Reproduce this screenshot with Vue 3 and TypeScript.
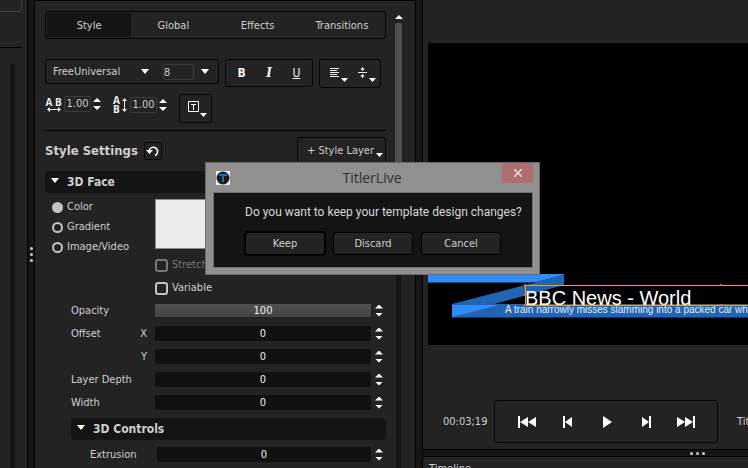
<script setup lang="ts">
import { ref, reactive } from 'vue'

interface Field {
  id: string
  label: string
  axis?: string
  value: string
  fill?: boolean
}

const tabs: string[] = ['Style', 'Global', 'Effects', 'Transitions']
const activeTab = ref('Style')
const fontFamily = ref('FreeUniversal')
const fontSize = ref('8')
const tracking = ref('1.00')
const leading = ref('1.00')
const fillModes: string[] = ['Color', 'Gradient', 'Image/Video']
const fillMode = ref('Color')
const stretch = ref(false)
const variable = ref(false)
const dialogOpen = ref(true)

const fields = reactive<Field[]>([
  { id: 'opacity', label: 'Opacity', value: '100', fill: true },
  { id: 'offset-x', label: 'Offset', axis: 'X', value: '0' },
  { id: 'offset-y', label: '', axis: 'Y', value: '0' },
  { id: 'depth', label: 'Layer Depth', value: '0' },
  { id: 'width', label: 'Width', value: '0' },
])
const extrusion = ref('0')

function step(field: Field, by: number) {
  field.value = String(Number(field.value) + by)
}
</script>

<template>
  <div class="app">
    <aside class="rail">
      <div class="rail-box"></div>
      <div class="rail-track"></div>
    </aside>
    <div class="splitter vertical"><i></i><i></i><i></i></div>

    <main class="panel">
      <div class="content">
        <nav class="tabs">
          <button v-for="t in tabs" :key="t" :class="{ active: t === activeTab }" @click="activeTab = t">{{ t }}</button>
        </nav>

        <div class="tools">
          <div class="group fonts">
            <div class="pick family">
              <select v-model="fontFamily" aria-label="Font"><option>FreeUniversal</option></select>
              <svg width="8" height="5"><path d="M0 0H8L4 5Z" fill="#fff" /></svg>
            </div>
            <div class="pick size">
              <select v-model="fontSize" aria-label="Font size"><option>8</option></select>
              <svg width="8" height="5"><path d="M0 0H8L4 5Z" fill="#fff" /></svg>
            </div>
          </div>
          <div class="group marks">
            <button class="b" aria-label="Bold">B</button>
            <button class="i" aria-label="Italic">I</button>
            <button class="u" aria-label="Underline">U</button>
          </div>
          <div class="group aligns">
            <button aria-label="Align text">
              <svg width="20" height="18" viewBox="0 0 20 18">
                <path d="M1 3.500H10M1 5.500H8M1 7.500H10M1 9.500H8M1 11.500H10" stroke="#eee" fill="none" />
                <path d="M12 13H19L15.500 17Z" fill="#fff" />
              </svg>
            </button>
            <button aria-label="Align vertically">
              <svg width="20" height="18" viewBox="0 0 20 18">
                <path d="M1 7.500H10M5.500 2V5M5.500 10V13" stroke="#eee" fill="none" />
                <path d="M3 3.500H8L5.500 6ZM3 11.500H8L5.500 9Z" fill="#eee" />
                <path d="M12 13H19L15.500 17Z" fill="#fff" />
              </svg>
            </button>
          </div>
        </div>

        <div class="metrics">
          <div class="metric">
            <span class="caption">
              <b>A B</b>
              <svg width="14" height="5"><path d="M2 2.500H12" stroke="#eee" /><path d="M0 2.500L3 0V5ZM14 2.500L11 0V5Z" fill="#eee" /></svg>
            </span>
            <input v-model="tracking" aria-label="Tracking" />
            <span class="spin"><button aria-label="Increase tracking"></button><button aria-label="Decrease tracking"></button></span>
          </div>
          <div class="metric">
            <span class="caption stacked">
              <span><b>A</b><b>B</b></span>
              <svg width="5" height="14"><path d="M2.500 2V12" stroke="#eee" /><path d="M2.500 0L5 3H0ZM2.500 14L5 11H0Z" fill="#eee" /></svg>
            </span>
            <input v-model="leading" aria-label="Leading" />
            <span class="spin"><button aria-label="Increase leading"></button><button aria-label="Decrease leading"></button></span>
          </div>
          <button class="group text-box" aria-label="Text box">
            <svg width="20" height="17" viewBox="0 0 20 17">
              <path d="M1.500 1.500H11.500V11.500H1.500Z M4 4.500H9M6.500 4V10" stroke="#fff" fill="none" />
              <path d="M13 13H20L16.500 17Z" fill="#fff" />
            </svg>
          </button>
        </div>

        <div class="heading">
          <h2>Style Settings</h2>
          <button class="group reset" aria-label="Reset">
            <svg width="14" height="14" viewBox="0 0 14 14">
              <path d="M3 7A4.300 4.300 0 1 1 9 11.500" stroke="#fff" stroke-width="1.500" fill="none" />
              <path d="M0 6H7L3.500 10Z" fill="#fff" />
            </svg>
          </button>
          <button class="group layer">+ Style Layer
            <svg width="7" height="4"><path d="M0 0H7L3.500 4Z" fill="#fff" /></svg>
          </button>
        </div>

        <button class="section"><svg width="8" height="5"><path d="M0 0H8L4 5Z" fill="#fff" /></svg>3D Face</button>

        <div class="face">
          <div class="modes">
            <label v-for="m in fillModes" :key="m"><input v-model="fillMode" type="radio" name="fill" :value="m" />{{ m }}</label>
          </div>
          <div class="swatch-col">
            <button class="swatch" aria-label="Face color"></button>
            <label class="dim"><input v-model="stretch" type="checkbox" disabled />Stretch</label>
            <label><input v-model="variable" type="checkbox" />Variable</label>
          </div>
        </div>

        <div class="fields">
          <div v-for="f in fields" :key="f.id" class="field">
            <label :for="f.id"><span>{{ f.label }}</span><span>{{ f.axis }}</span></label>
            <input :id="f.id" v-model="f.value" :class="{ fill: f.fill }" />
            <span class="spin"><button aria-label="Increase" @click="step(f, 1)"></button><button aria-label="Decrease" @click="step(f, -1)"></button></span>
          </div>
        </div>

        <button class="section nested"><svg width="8" height="5"><path d="M0 0H8L4 5Z" fill="#fff" /></svg>3D Controls</button>
        <div class="field inner">
          <label for="extrusion">Extrusion</label>
          <input id="extrusion" v-model="extrusion" />
          <span class="spin"><button aria-label="Increase"></button><button aria-label="Decrease"></button></span>
        </div>
      </div>
      <div class="scroll">
        <svg width="8" height="4"><path d="M0 4H8L4 0Z" fill="#fff" /></svg>
        <div class="thumb"></div>
        <div class="track"></div>
      </div>
    </main>
    <div class="splitter"></div>

    <section class="stage">
      <div class="viewer">
        <svg class="preview" viewBox="0 0 320 302" preserveAspectRatio="xMinYMin slice">
          <path d="M0 231H136V232L109 239H0Z" fill="#2f8df9" />
          <path d="M0 239.500H104" stroke="#174a85" />
          <path d="M136 232V242L66 261L24 274V261L109 239Z" fill="#2264b4" />
          <path d="M24 261H320V274H24Z" fill="#2264b4" />
          <path d="M24 262H71L24 274Z" fill="#2f8df9" />
          <path d="M24 274.500H320" stroke="#12365f" />
          <text x="97" y="262" class="title">BBC News - World</text>
          <text x="77" y="270" class="crawl">A train narrowly misses slamming into a packed car which</text>
          <path d="M330 242.500H97.500V262.500H330" stroke="#f5a11c" fill="none" />
          <path d="M96 241h2v2h-2zM96 251h2v2h-2zM96 261h2v2h-2zM292 241h2v2h-2zM292 261h2v2h-2z" fill="#f0605a" />
        </svg>
        <div class="transport">
          <time>00:03;19</time>
          <div class="group keys">
            <button aria-label="Go to start"><svg width="19" height="12"><path d="M0 0H2V12H0ZM10 1V11L2 6ZM18 1V11L10 6Z" fill="#fff" /></svg></button>
            <button aria-label="Step back"><svg width="19" height="12"><path d="M5 0H7V12H5ZM14 1V11L7 6Z" fill="#fff" /></svg></button>
            <button aria-label="Play"><svg width="19" height="12"><path d="M5 0L14 6L5 12Z" fill="#fff" /></svg></button>
            <button aria-label="Step forward"><svg width="19" height="12"><path d="M5 1V11L12 6ZM12 0H14V12H12Z" fill="#fff" /></svg></button>
            <button aria-label="Go to end"><svg width="19" height="12"><path d="M0 1V11L8 6ZM8 1V11L16 6ZM16 0H18V12H16Z" fill="#fff" /></svg></button>
          </div>
          <span>Title</span>
        </div>
      </div>
      <div class="splitter horizontal"><i></i><i></i><i></i></div>
      <div class="timeline">Timeline</div>
    </section>

    <div v-if="dialogOpen" class="dialog" role="dialog" aria-labelledby="dialog-title">
      <header>
        <svg width="14" height="14" viewBox="0 0 14 14">
          <path d="M0 0H14V14H0Z" fill="#eee" /><circle cx="7" cy="7" r="6.500" fill="#171c22" />
          <path d="M3 3H11V5H8V11H6V5H3Z" fill="#2769ad" />
        </svg>
        <h1 id="dialog-title">TitlerLive</h1>
        <button class="close" aria-label="Close" @click="dialogOpen = false">
          <svg width="8" height="8"><path d="M0 0L8 8M8 0L0 8" stroke="#f0dcdc" stroke-width="1.500" /></svg>
        </button>
      </header>
      <div class="body">
        <p>Do you want to keep your template design changes?</p>
        <div class="actions">
          <button class="default" @click="dialogOpen = false">Keep</button>
          <button @click="dialogOpen = false">Discard</button>
          <button @click="dialogOpen = false">Cancel</button>
        </div>
      </div>
    </div>
  </div>
</template>

<style>
body {
  background: #232323;
}
</style>

<style scoped>
* {
  box-sizing: border-box;
}
button,
input,
select {
  appearance: none;
  margin: 0;
  padding: 0;
  border: 0;
  background: none;
  color: inherit;
  font: inherit;
}
svg {
  display: block;
  flex: none;
}
.app {
  position: relative;
  display: grid;
  grid-template-columns: 27px 8px 380px 8px minmax(0, 1fr);
  height: 100vh;
  overflow: hidden;
  background: #232323;
  color: #cfcfcf;
  font: 11px/16px "DejaVu Sans Condensed", "Open Sans", sans-serif;
}
.rail {
  display: flex;
  flex-direction: column;
  padding-right: 5px;
}
.rail-box {
  height: 12px;
  border: solid #3c3c3c;
  border-width: 0 1px 1px 0;
  border-radius: 0 0 3px 0;
}
.rail-track {
  flex: 1;
  margin-top: 35px;
  border-top: 1px solid #000;
  padding: 16px 7px 0 10px;
  background: #141414 content-box;
}
.splitter {
  display: flex;
  align-items: center;
  justify-content: center;
  gap: 3px;
  background: #151515;
  border: solid #000;
  border-width: 0 1px;
}
.splitter.vertical {
  flex-direction: column;
  padding-top: 40px;
}
.splitter i {
  width: 3px;
  height: 3px;
  border-radius: 50%;
  background: #ccc;
}
.splitter.horizontal {
  height: 8px;
  border-width: 1px 0;
  padding-left: 223px;
}
.panel {
  display: flex;
  min-height: 0;
  overflow: hidden;
  border-top: 1px solid #000;
}
.content {
  flex: 1;
  min-width: 0;
  padding: 10px 9px 0 10px;
}
.group {
  border: 1px solid #050505;
  border-radius: 3px;
}
.tabs {
  display: grid;
  grid-template-columns: repeat(4, 1fr);
  height: 28px;
  padding: 1px;
  border: 1px solid #050505;
  border-radius: 3px;
}
.tabs button {
  padding-top: 2px;
}
.tabs .active {
  background: #151515;
}
.tools {
  display: flex;
  align-items: flex-start;
  gap: 6px;
  margin-top: 20px;
}
.fonts {
  display: flex;
  width: 174px;
  height: 25px;
  padding: 3px 9px 3px 7px;
  gap: 14px;
}
.pick {
  display: flex;
  align-items: center;
  gap: 3px;
}
.family {
  flex: 1;
}
.pick select {
  flex: 1;
  min-width: 0;
}
.size {
  width: 46px;
  gap: 7px;
}
.size select {
  height: 16px;
  border: 1px solid #3c3c3c;
  border-radius: 2px;
}
.marks,
.aligns {
  display: grid;
  grid-template-columns: repeat(3, 1fr);
  width: 88px;
  height: 28px;
  padding: 0 2px;
}
.marks button {
  color: #f2f2f2;
  font-size: 12px;
}
.marks .b {
  font-weight: bold;
}
.marks .i {
  font-family: "DejaVu Serif", serif;
  font-style: italic;
  font-weight: bold;
}
.marks .u {
  text-decoration: underline;
}
.aligns {
  grid-template-columns: 1fr 1fr;
  width: 62px;
  height: 29px;
}
.aligns button {
  display: grid;
  place-items: center;
  padding-left: 5px;
}
.metrics {
  display: flex;
  align-items: flex-start;
  gap: 12px;
  height: 43px;
  padding-top: 6px;
  border-bottom: 1px solid #000;
}
.metric {
  display: flex;
  align-items: center;
  gap: 2px;
  margin-top: 2px;
}
.metric input {
  width: 27px;
  height: 16px;
  border: 1px solid #3c3c3c;
  border-radius: 2px;
  text-align: center;
}
.caption {
  display: flex;
  flex-direction: column;
  align-items: center;
  width: 17px;
}
.caption b {
  display: block;
  color: #eee;
  font: bold 10px/10px "Open Sans", sans-serif;
  white-space: nowrap;
}
.caption.stacked {
  flex-direction: row;
  gap: 2px;
  width: 15px;
}
.caption.stacked b {
  line-height: 9px;
}
.spin {
  display: flex;
  flex-direction: column;
  gap: 4px;
  width: 8px;
}
.spin button {
  height: 4px;
  background: #fff;
  clip-path: polygon(50% 0, 100% 100%, 0 100%);
}
.spin button + button {
  clip-path: polygon(0 0, 100% 0, 50% 100%);
}
.text-box {
  display: grid;
  place-items: center;
  width: 33px;
  height: 29px;
  padding-left: 3px;
}
.heading {
  display: flex;
  align-items: center;
  height: 40px;
  gap: 6px;
}
h2 {
  margin: 0;
  font-size: 13px;
}
.reset {
  display: grid;
  place-items: center;
  width: 18px;
  height: 18px;
}
.layer {
  display: flex;
  align-items: center;
  justify-content: flex-end;
  gap: 2px;
  width: 89px;
  height: 28px;
  margin-left: auto;
  padding-right: 2px;
}
.layer svg {
  margin-top: 8px;
}
.section {
  display: flex;
  align-items: center;
  gap: 8px;
  width: 100%;
  height: 22px;
  padding-left: 6px;
  border-radius: 4px;
  background: #141414;
  font-size: 12px;
  font-weight: bold;
}
.section svg {
  margin-bottom: 4px;
}
.section.nested {
  width: calc(100% - 26px);
  margin: 6px 0 0 26px;
}
.face {
  display: flex;
  padding: 6px 0 0 7px;
}
.modes {
  width: 103px;
}
.face label {
  display: flex;
  align-items: center;
  gap: 4px;
}
.modes label {
  height: 16px;
  margin-bottom: 4px;
}
.modes input {
  width: 11px;
  height: 11px;
  border: 2px solid #c4c4c4;
  border-radius: 50%;
}
.modes input:checked {
  background: #c4c4c4;
}
.swatch {
  display: block;
  width: 80px;
  height: 50px;
  margin-bottom: 8px;
  border: 1px solid #8a8a8a;
  background: #ebebeb;
}
.swatch-col label {
  height: 16px;
  margin-bottom: 7px;
}
.swatch-col input {
  width: 13px;
  height: 13px;
  border: 2px solid #c4c4c4;
  border-radius: 3px;
}
.swatch-col .dim {
  color: #777;
}
.swatch-col .dim input {
  border-color: #777;
}
.field {
  display: flex;
  align-items: center;
  gap: 4px;
  height: 15px;
  margin-bottom: 8px;
  padding: 0 3px 0 26px;
}
.field label {
  display: flex;
  justify-content: space-between;
  width: 80px;
  padding-right: 4px;
}
.field input {
  flex: 1;
  min-width: 0;
  height: 15px;
  border-radius: 2px;
  background: #111;
  color: #eee;
  text-align: center;
}
.field input.fill {
  height: 13px;
  border-radius: 0;
  background: linear-gradient(#505050, #444);
}
.inner {
  margin-top: 7px;
  padding-left: 45px;
}
.inner label {
  width: 63px;
}
.scroll {
  display: flex;
  flex-direction: column;
  align-items: center;
  width: 20px;
  padding: 14px 13px 0 0;
}
.thumb {
  width: 7px;
  height: 190px;
  margin-top: 4px;
  border-radius: 2px;
  background: #505050;
}
.track {
  flex: 1;
  width: 5px;
  background: #151515;
}
.stage {
  display: flex;
  flex-direction: column;
  min-width: 0;
}
.viewer {
  display: flex;
  flex: 1;
  flex-direction: column;
  min-height: 0;
  padding: 43px 0 6px 5px;
}
.preview {
  flex: 1;
  width: 100%;
  min-height: 0;
  background: #000;
}
.title {
  fill: #fff;
  font: 20px "Liberation Sans", sans-serif;
}
.crawl {
  fill: #e6eefa;
  font: 10px "Liberation Sans", sans-serif;
}
.transport {
  display: flex;
  align-items: center;
  height: 43px;
  margin-top: 55px;
  padding-left: 15px;
  overflow: hidden;
}
.transport time {
  flex: none;
  width: 51px;
}
.keys {
  display: flex;
  flex: none;
  align-items: center;
  justify-content: space-between;
  width: 224px;
  height: 43px;
  margin-right: 19px;
  padding: 0 21px 0 23px;
}
.timeline {
  height: 11px;
  padding: 4px 0 0 6px;
  overflow: hidden;
}
.dialog {
  position: absolute;
  top: 162px;
  left: 205px;
  width: 335px;
  padding: 0 6px 6px 7px;
  border: 1px solid #6a6a6a;
  background: #909090;
}
.dialog header {
  display: flex;
  align-items: center;
  height: 29px;
  padding-left: 3px;
}
h1 {
  flex: 1;
  margin: 0;
  padding-left: 12px;
  color: #303030;
  font: 14px/20px "Open Sans", sans-serif;
  text-align: center;
}
.close {
  display: grid;
  place-items: center;
  align-self: flex-start;
  width: 31px;
  height: 20px;
  background: #ae6d6f;
}
.body {
  height: 76px;
  padding: 11px 30px 0 31px;
  border: 1px solid #6f6f6f;
  background: #141414;
}
.body p {
  margin: 0;
  color: #d8d8d8;
  font: 12px/16px Roboto, "Open Sans", sans-serif;
  white-space: nowrap;
}
.actions {
  display: flex;
  gap: 8px;
  margin-top: 12px;
}
.actions button {
  width: 80px;
  height: 23px;
  border: 1px solid #000;
  border-radius: 3px;
  background: #232323;
}
.actions .default {
  box-shadow: 0 0 0 1px #000;
}
</style>
